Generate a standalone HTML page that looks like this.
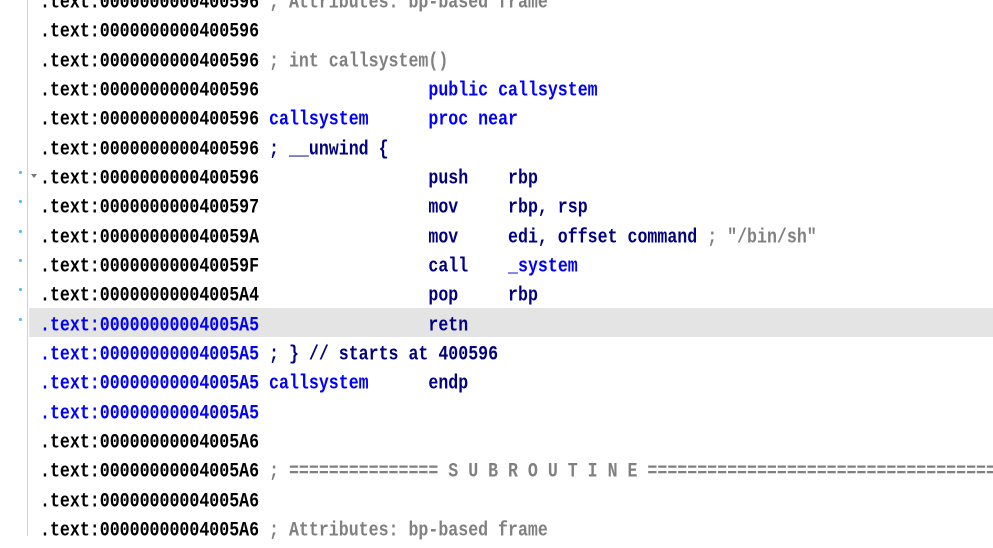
<!DOCTYPE html>
<html><head><style>
body{margin:0;width:993px;height:536px;overflow:hidden;background:#fff;position:relative;font-family:"Liberation Mono",monospace;font-weight:bold;font-size:16.6px}
.l{position:absolute;left:40px;height:29.33px;line-height:29.33px;white-space:pre;color:#000;margin-top:1.5px}
.l span.t{display:inline-block;transform:scaleY(1.22);transform-origin:50% 55%}
.g{color:#808080}.n{color:#000080}.b{color:#0000ff}
.hl{position:absolute;left:29px;width:964px;top:308px;height:29px;background:#e4e4e4}
.vl{position:absolute;left:27px;top:0;width:1px;height:536px;background:#d0d0d0}
.d{position:absolute;left:19px;width:3px;height:3px;background:#4fc3f7;border-radius:1px}
</style></head><body>
<div class="vl"></div>
<div class="hl"></div>
<div class="d" style="top:171px"></div>
<div class="d" style="top:200px"></div>
<div class="d" style="top:230px"></div>
<div class="d" style="top:259px"></div>
<div class="d" style="top:288px"></div>
<div class="d" style="top:318px"></div>
<div style="position:absolute;left:31px;top:174px;width:0;height:0;border-left:3px solid transparent;border-right:3px solid transparent;border-top:4px solid #777"></div>
<div class="l" style="top:-13.7px"><span class="t">.text:0000000000400596 <span class="g">; Attributes: bp-based frame</span></span></div>
<div class="l" style="top:15.6px"><span class="t">.text:0000000000400596</span></div>
<div class="l" style="top:45px"><span class="t">.text:0000000000400596 <span class="g">; int callsystem()</span></span></div>
<div class="l" style="top:74.3px"><span class="t">.text:0000000000400596                 <span class="b">public callsystem</span></span></div>
<div class="l" style="top:103.6px"><span class="t">.text:0000000000400596 <span class="b">callsystem</span>      <span class="b">proc near</span></span></div>
<div class="l" style="top:133px"><span class="t">.text:0000000000400596 <span class="n">; __unwind {</span></span></div>
<div class="l" style="top:162.3px"><span class="t">.text:0000000000400596                 <span class="n">push    rbp</span></span></div>
<div class="l" style="top:191.6px"><span class="t">.text:0000000000400597                 <span class="n">mov     rbp, rsp</span></span></div>
<div class="l" style="top:221px"><span class="t">.text:000000000040059A                 <span class="n">mov     edi, offset command</span> <span class="g">; "/bin/sh"</span></span></div>
<div class="l" style="top:250.3px"><span class="t">.text:000000000040059F                 <span class="n">call    </span><span class="b">_system</span></span></div>
<div class="l" style="top:279.6px"><span class="t">.text:00000000004005A4                 <span class="n">pop     rbp</span></span></div>
<div class="l" style="top:309px"><span class="t"><span class="b">.text:00000000004005A5</span>                 <span class="n">retn</span></span></div>
<div class="l" style="top:338.3px"><span class="t"><span class="b">.text:00000000004005A5</span> <span class="n">; } // starts at 400596</span></span></div>
<div class="l" style="top:367.6px"><span class="t"><span class="b">.text:00000000004005A5</span> <span class="b">callsystem</span>      <span class="n">endp</span></span></div>
<div class="l" style="top:397px"><span class="t"><span class="b">.text:00000000004005A5</span></span></div>
<div class="l" style="top:426.3px"><span class="t">.text:00000000004005A6</span></div>
<div class="l" style="top:455.6px"><span class="t">.text:00000000004005A6 <span class="g">; =============== S U B R O U T I N E =======================================</span></span></div>
<div class="l" style="top:485px"><span class="t">.text:00000000004005A6</span></div>
<div class="l" style="top:514.3px"><span class="t">.text:00000000004005A6 <span class="g">; Attributes: bp-based frame</span></span></div>
</body></html>
